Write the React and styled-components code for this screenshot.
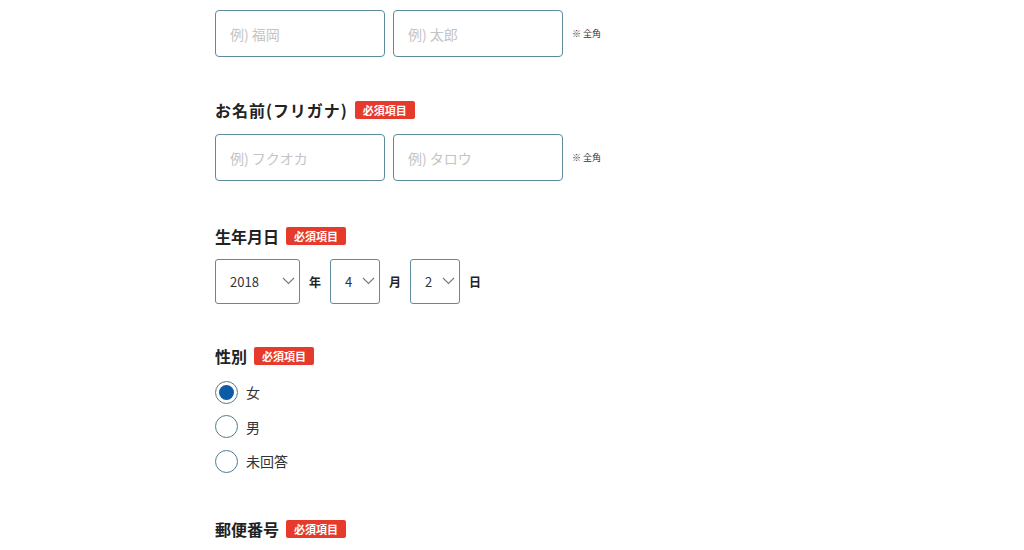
import React, { useState } from "react";
import styled, { createGlobalStyle } from "styled-components";

const Global = createGlobalStyle`
  body { margin: 0; background: #fff; color: #333;
    font-family: "Noto Sans CJK JP", "Noto Sans", sans-serif; }
  * { box-sizing: border-box; }
`;

const Form = styled.form`
  margin-top: -24px; padding-left: 215px;
  display: flex; flex-direction: column; gap: 43px;
`;
const Section = styled.div`
  display:flex; flex-direction:column; margin-top:${p => p.$mt || 0}px;
`;
const LabelRow = styled.div`
  display:flex; align-items:center; height:20px; margin-bottom:${p => p.$mb ?? 14}px;
`;
const Label = styled.span`
  font-size:16px; font-weight:700; color:#222;
  letter-spacing:${p => (p.$spaced ? "0.06em" : "0")};
`;
const Badge = styled.span`
  margin-left: 7px; background:#e53a2c; color:#fff;
  font-size:11px; font-weight:700; line-height:18px; height:18px;
  padding: 0 8px; border-radius:2px;
`;
const Row = styled.div`display:flex; align-items:center; gap:8px;`;
const Input = styled.input`
  width:170px; height:47px; border:1px solid #5d8b9c; border-radius:4px;
  padding:0 14px; font-size:14px; font-family:inherit; color:#333; outline:none;
  &::placeholder { color:#c4c4c4; }
`;
const Note = styled.span`font-size:9px; color:#333; margin-left:1px;`;

const SelectBox = styled.div`
  position:relative; width:${p => p.$w}px; height:45px;
`;
const Select = styled.select`
  appearance:none; width:100%; height:100%;
  border:1px solid #5d8b9c; border-radius:3px; background:#fff;
  padding:0 0 0 14px; font-size:13px; color:#333; font-family:inherit; outline:none;
`;
const Chevron = styled.svg`
  position:absolute; right:5px; top:18px; pointer-events:none;
`;
const Unit = styled.span`font-size:12px; font-weight:700; color:#222;`;
const DateRow = styled.div`display:flex; align-items:center; gap:9px;`;

const RadioList = styled.div`display:flex; flex-direction:column; margin:-5px 0 -3px;`;
const RadioRow = styled.label`
  display:flex; align-items:center; height:34.5px; gap:8px; font-size:14px; color:#333; cursor:pointer;
`;
const Circle = styled.span`
  width:23px; height:23px; border-radius:50%; border:1px solid #4e7d90;
  display:flex; align-items:center; justify-content:center; background:#fff;
  &::after { content:""; width:15px; height:15px; border-radius:50%;
    background:${p => (p.$on ? "#0d5aa6" : "transparent")}; }
`;

function Sel({ w, value, options }) {
  return (
    <SelectBox $w={w}>
      <Select defaultValue={value}>
        {options.map(o => <option key={o}>{o}</option>)}
      </Select>
      <Chevron width="13" height="8" viewBox="0 0 13 8">
        <path d="M1 1l5.5 5.5L12 1" fill="none" stroke="#777" strokeWidth="1.1" />
      </Chevron>
    </SelectBox>
  );
}

export default function App() {
  const [sex, setSex] = useState("女");
  const years = Array.from({ length: 100 }, (_, i) => String(2024 - i));
  const months = Array.from({ length: 12 }, (_, i) => String(i + 1));
  const days = Array.from({ length: 31 }, (_, i) => String(i + 1));
  return (
    <>
      <Global />
      <Form>
        <Section>
          <LabelRow><Label>お名前</Label><Badge>必須項目</Badge></LabelRow>
          <Row>
            <Input placeholder="例) 福岡" />
            <Input placeholder="例) 太郎" />
            <Note>※ 全角</Note>
          </Row>
        </Section>
        <Section>
          <LabelRow><Label $spaced>お名前(フリガナ)</Label><Badge>必須項目</Badge></LabelRow>
          <Row>
            <Input placeholder="例) フクオカ" />
            <Input placeholder="例) タロウ" />
            <Note>※ 全角</Note>
          </Row>
        </Section>
        <Section $mt={2}>
          <LabelRow $mb={13}><Label>生年月日</Label><Badge>必須項目</Badge></LabelRow>
          <DateRow>
            <Sel w={85} value="2018" options={years} /><Unit>年</Unit>
            <Sel w={50} value="4" options={months} /><Unit>月</Unit>
            <Sel w={50} value="2" options={days} /><Unit>日</Unit>
          </DateRow>
        </Section>
        <Section $mt={-1}>
          <LabelRow><Label>性別</Label><Badge>必須項目</Badge></LabelRow>
          <RadioList>
            {["女", "男", "未回答"].map(s => (
              <RadioRow key={s} onClick={() => setSex(s)}>
                <Circle $on={sex === s} />{s}
              </RadioRow>
            ))}
          </RadioList>
        </Section>
        <Section>
          <LabelRow><Label>郵便番号</Label><Badge>必須項目</Badge></LabelRow>
          <Row>
            <Input placeholder="例) 810" />
            <Input placeholder="例) 0001" />
          </Row>
        </Section>
      </Form>
    </>
  );
}
